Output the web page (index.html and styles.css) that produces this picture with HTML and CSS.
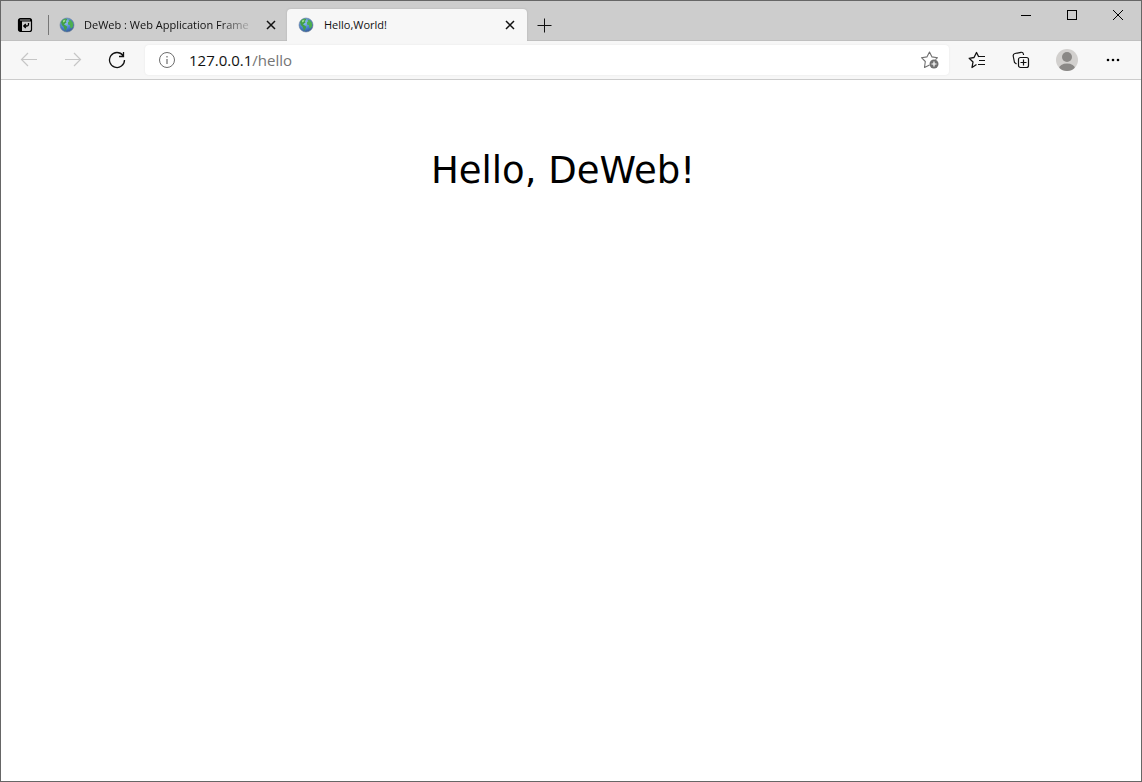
FILE: index.html
```html
<!DOCTYPE html>
<html lang="en">
<head>
<meta charset="utf-8">
<title>Hello,World!</title>
<link rel="stylesheet" href="styles.css">
</head>
<body>
<svg class="defs" aria-hidden="true">
  <defs>
    <radialGradient id="ocean" cx="40%" cy="30%" r="75%">
      <stop offset="0" stop-color="#9cc8f5"/>
      <stop offset=".6" stop-color="#4680cc"/>
      <stop offset="1" stop-color="#34568f"/>
    </radialGradient>
    <symbol id="globe" viewBox="0 0 16 16">
      <circle cx="8" cy="8" r="7" fill="url(#ocean)" stroke="#6b7f99" stroke-width=".6"/>
      <path d="M2 5 4 2.6 7 1.6 8.4 2.6 7 4 7.6 5.4 6 6.6 5 7.4 6.6 8.4 8.4 9.8 7.4 12 6.2 14 5.4 12 4.6 9.8 2.8 8Z" fill="#43a047"/>
      <path d="M9.4 2.4 12 3.2 14 6 14.2 9 12.6 11.4 11.2 10.4 11 8.2 9 7.4 9 5.2 10.4 4.2Z" fill="#4caf50"/>
      <path d="M4 3.4 6.4 2.4 6 4.4 4 5.6Z" fill="#9be08a"/>
    </symbol>
  </defs>
</svg>
<div class="window">
  <header class="tabstrip">
    <button class="tab-actions" aria-label="Tab actions">
      <svg width="16" height="16" viewBox="0 0 16 16"><rect x="1.5" y="1.5" width="13" height="13" rx="2" fill="none" stroke="#000" stroke-width="1.2"/><path d="M1.5 3.5A2 2 0 0 1 3.5 1.5H12.5A2 2 0 0 1 14.5 3.5V4.5H5V14.5H3.5A2 2 0 0 1 1.5 12.5Z" fill="#000"/><path d="M3 3H13" stroke="#cdcdcd" stroke-width=".8"/><path d="M11.5 6V7.5Q11.5 9 10 9H7M8.8 7 6.8 9 8.8 11" fill="none" stroke="#000" stroke-width="1.3"/></svg>
    </button>
    <div class="tab tab-idle">
      <svg class="favicon" width="16" height="16"><use href="#globe"/></svg>
      <span class="tab-title">DeWeb : Web Application Frame</span>
      <button class="tab-close" aria-label="Close tab"><svg width="10" height="10" viewBox="0 0 10 10"><path d="M1 1 9 9M9 1 1 9" stroke="#111" stroke-width="1.5"/></svg></button>
    </div>
    <div class="tab tab-active">
      <svg class="favicon" width="16" height="16"><use href="#globe"/></svg>
      <span class="tab-title">Hello,World!</span>
      <button class="tab-close" aria-label="Close tab"><svg width="10" height="10" viewBox="0 0 10 10"><path d="M1 1 9 9M9 1 1 9" stroke="#111" stroke-width="1.5"/></svg></button>
    </div>
    <button class="new-tab" aria-label="New tab"><svg width="15" height="15" viewBox="0 0 15 15"><path d="M7.5 .5V14.5M.5 7.5H14.5" stroke="#111"/></svg></button>
    <div class="window-controls">
      <button aria-label="Minimize"><svg width="12" height="12" viewBox="0 0 12 12"><path d="M1 6.5H11" stroke="#000"/></svg></button>
      <button aria-label="Maximize"><svg width="12" height="12" viewBox="0 0 12 12"><rect x="1.5" y="1.5" width="9" height="9" fill="none" stroke="#000"/></svg></button>
      <button aria-label="Close"><svg width="12" height="12" viewBox="0 0 12 12"><path d="M1 1 11 11M11 1 1 11" stroke="#000"/></svg></button>
    </div>
  </header>
  <nav class="toolbar">
    <button class="tool" aria-label="Back" disabled><svg width="18" height="16" viewBox="0 0 18 16"><path d="M17 7.5H1.5M8 1 1.5 7.5 8 14" fill="none" stroke="#c6c6c6" stroke-width="1.2"/></svg></button>
    <button class="tool" aria-label="Forward" disabled><svg width="18" height="16" viewBox="0 0 18 16"><path d="M1 7.5H16.5M10 1 16.5 7.5 10 14" fill="none" stroke="#c6c6c6" stroke-width="1.2"/></svg></button>
    <button class="tool" aria-label="Refresh"><svg width="18" height="18" viewBox="0 0 18 18"><path d="M16.5 9A7.5 7.5 0 1 1 15 4.5M15.5 1V5.5H11" fill="none" stroke="#111" stroke-width="1.3"/></svg></button>
    <div class="address">
      <svg width="18" height="18" viewBox="0 0 18 18"><circle cx="9" cy="9" r="7.5" fill="none" stroke="#6d6d6d"/><path d="M9 8V13M9 5V6.5" stroke="#6d6d6d" stroke-width="1.2"/></svg>
      <a class="url" href="#hello">127.0.0.1<span>/hello</span></a>
      <button class="tool-star" aria-label="Add to favorites"><svg width="20" height="20" viewBox="0 0 20 20"><path d="M9.5 15 4.5 17.5 5.3 11.5 1.5 7.7 6.9 6.9 9.5 2 12 6.9 17.5 7.7 15.5 9.7" fill="none" stroke="#707070" stroke-width="1.1" stroke-linejoin="round"/><circle cx="14" cy="14" r="4.5" fill="#707070"/><path d="M14 11.5V16.5M11.5 14H16.5" stroke="#fff" stroke-width="1.2"/></svg></button>
    </div>
    <div class="tools">
      <button class="tool" aria-label="Favorites"><svg width="18" height="18" viewBox="0 0 18 18"><path d="M8.5 13.5 4 16.5 5 11 1.2 7.3 6 6.5 8.5 1.5 10.8 6" fill="none" stroke="#111" stroke-width="1.3" stroke-linejoin="round"/><path d="M10.5 5.5H17M11 9.5H17M10 13.5H17" stroke="#111" stroke-width="1.2"/></svg></button>
      <button class="tool" aria-label="Collections"><svg width="18" height="18" viewBox="0 0 18 18"><path d="M4.5 13 2.5 11.5 1.2 5Q1 3 3 2.5L9 1.3Q11 1 11.4 3L11.6 4" fill="none" stroke="#111" stroke-width="1.2"/><rect x="6.5" y="6.5" width="10" height="10" rx="2" fill="none" stroke="#111" stroke-width="1.2"/><path d="M11.5 8.5V14.5M8.5 11.5H14.5" stroke="#111" stroke-width="1.2"/></svg></button>
      <button class="tool tool-wide" aria-label="Profile"><svg width="22" height="22" viewBox="0 0 22 22"><clipPath id="face"><circle cx="11" cy="11" r="11"/></clipPath><g clip-path="url(#face)"><rect width="22" height="22" fill="#d2d0ce"/><circle cx="11" cy="8" r="5" fill="#8a8886"/><ellipse cx="11" cy="19.5" rx="8" ry="5" fill="#8a8886"/></g></svg></button>
      <button class="tool" aria-label="Settings and more"><svg width="16" height="4" viewBox="0 0 16 4"><circle cx="3" cy="2" r="1.3"/><circle cx="8" cy="2" r="1.3"/><circle cx="13" cy="2" r="1.3"/></svg></button>
    </div>
  </nav>
  <main class="page" id="hello">
    <h1>Hello, DeWeb!</h1>
  </main>
</div>
</body>
</html>
```
FILE: styles.css
```css
* { box-sizing: border-box; }

body {
  margin: 0;
  font-family: "Open Sans", "Noto Sans", sans-serif;
  color: #111;
}

.defs {
  position: absolute;
  width: 0;
  height: 0;
}

button {
  display: flex;
  align-items: center;
  justify-content: center;
  padding: 0;
  border: 0;
  background: none;
}

svg { display: block; flex: none; }

.window {
  display: flex;
  flex-direction: column;
  min-height: 100vh;
  border: 1px solid #666;
  background: #fff;
}

.tabstrip {
  display: flex;
  align-items: flex-end;
  height: 40px;
  background: #cdcdcd;
  box-shadow: inset 0 -1px #c0c0c0;
}

.tab-actions {
  width: 48px;
  height: 32px;
  background: linear-gradient(#777, #777) right center / 1px 20px no-repeat;
}

.tab {
  display: flex;
  align-items: center;
  gap: 10px;
  height: 32px;
  padding: 0 10px 0 11px;
  font-size: 11px;
  line-height: 16px;
}

.tab-idle {
  gap: 9px;
  width: 238px;
  padding: 0 9px 0 10px;
}

.tab-active {
  width: 240px;
  border-radius: 4px 4px 0 0;
  background: #f7f7f7;
  box-shadow: 0 0 2px #aaa;
  clip-path: inset(-2px -2px 0);
}

.tab-title {
  flex: 1;
  white-space: nowrap;
}

.tab-idle .tab-title {
  mask-image: linear-gradient(to right, #000 calc(100% - 36px), transparent);
}

.tab-close { width: 14px; height: 20px; }

.new-tab { width: 34px; height: 32px; }

.window-controls {
  display: flex;
  align-self: flex-start;
  margin-left: auto;
}

.window-controls button { width: 46px; height: 28px; }

.toolbar {
  display: flex;
  align-items: center;
  height: 39px;
  padding-left: 6px;
  border-bottom: 1px solid #ccc;
  background: #f7f7f7;
}

.tool { width: 44px; height: 32px; }

.tool-wide { width: 48px; }

.address {
  display: flex;
  flex: 1;
  align-items: center;
  height: 30px;
  margin: 0 6px;
  padding: 0 9px 0 13px;
  border-radius: 4px;
  background: #fff;
  box-shadow: 0 0 2px #e4e4e4;
}

.url {
  flex: 1;
  margin-left: 13px;
  font-size: 15px;
  line-height: 20px;
  color: #111;
  text-decoration: none;
}

.url span { color: #757575; }

.tools { display: flex; padding-right: 6px; }

.page {
  flex: 1;
  padding: 67px 16px 0 0;
}

h1 {
  margin: 0;
  font-family: Verdana, "DejaVu Sans", sans-serif;
  font-size: 37px;
  font-weight: 400;
  line-height: 48px;
  text-align: center;
  color: #000;
}
```
